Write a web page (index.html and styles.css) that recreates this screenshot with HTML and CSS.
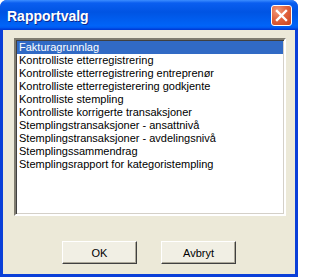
FILE: index.html
```html
<!DOCTYPE html>
<html>
<head>
<meta charset="utf-8">
<link rel="stylesheet" href="styles.css">
</head>
<body>
<div class="window">
  <div class="titlebar">
    <span class="title">Rapportvalg</span>
    <button class="close" aria-label="Lukk">
      <svg width="13" height="13" viewBox="0 0 13 13"><path d="M2 2 L11 11 M11 2 L2 11" stroke="#fff" stroke-width="2.4" stroke-linecap="square"/></svg>
    </button>
  </div>
  <div class="body">
    <div class="listbox">
      <div class="item selected">Fakturagrunnlag</div>
      <div class="item">Kontrolliste etterregistrering</div>
      <div class="item">Kontrolliste etterregistrering entreprenør</div>
      <div class="item">Kontrolliste etterregisterering godkjente</div>
      <div class="item">Kontrolliste stempling</div>
      <div class="item">Kontrolliste korrigerte transaksjoner</div>
      <div class="item">Stemplingstransaksjoner - ansattnivå</div>
      <div class="item">Stemplingstransaksjoner - avdelingsnivå</div>
      <div class="item">Stemplingssammendrag</div>
      <div class="item">Stemplingsrapport for kategoristempling</div>
    </div>
    <div class="buttons">
      <button class="btn">OK</button>
      <button class="btn">Avbryt</button>
    </div>
  </div>
</div>
</body>
</html>
```
FILE: styles.css
```css
html, body {
  margin: 0;
  padding: 0;
  background: #ffffff;
}
.window {
  width: 298px;
  height: 277px;
  box-sizing: border-box;
  display: flex;
  flex-direction: column;
  background: #0a3fd8;
  border-radius: 7px 7px 0 0;
  overflow: hidden;
  font-family: "Liberation Sans", Arial, sans-serif;
}
.titlebar {
  height: 30px;
  flex: none;
  display: flex;
  align-items: center;
  justify-content: space-between;
  padding: 0 6px 0 7px;
  background: linear-gradient(180deg, #3c8dff 0%, #0a5ef0 10%, #0054e3 40%, #0064f8 86%, #0058f0 93%, #003dd7 97%, #003dd7 100%);
}
.title {
  color: #ffffff;
  font-weight: bold;
  font-size: 14px;
  letter-spacing: 0;
  text-shadow: 1px 1px 0 #0c2a93;
  margin-top: 1px;
}
.close {
  width: 21px;
  height: 21px;
  padding: 0;
  margin: 1px 0 0 0;
  border: 1px solid #ffffff;
  border-radius: 3px;
  background: radial-gradient(circle at 30% 25%, #f29a7a 0%, #e2643e 45%, #c8421e 100%);
  display: flex;
  align-items: center;
  justify-content: center;
  box-sizing: border-box;
}
.body {
  flex: 1;
  margin: 0 3px 3px 3px;
  background: #ece9d8;
  padding: 8px 9px 0 11px;
}
.listbox {
  width: 272px;
  height: 178px;
  box-sizing: border-box;
  background: #ffffff;
  border-style: solid;
  border-width: 2px;
  border-color: #7f7c70 #ffffff #ffffff #7f7c70;
  box-shadow: inset 1px 1px 0 #404040, inset -1px -1px 0 #d4d0c8;
  padding: 1px 1px;
}
.item {
  height: 13px;
  line-height: 13px;
  font-size: 11px;
  color: #000000;
  padding-left: 2px;
  white-space: nowrap;
}
.item.selected {
  background: #316ac5;
  color: #ffffff;
}
.buttons {
  display: flex;
  justify-content: center;
  gap: 24px;
  margin-top: 25px;
  margin-left: -11px;
  margin-right: -9px;
}
.btn {
  width: 75px;
  height: 23px;
  box-sizing: border-box;
  font-family: "Liberation Sans", Arial, sans-serif;
  font-size: 11px;
  color: #000000;
  background: #f1efe4;
  border-style: solid;
  border-width: 1px;
  border-color: #ffffff #404040 #404040 #ffffff;
  box-shadow: inset -1px -1px 0 #aca899;
  padding: 0;
}
```
